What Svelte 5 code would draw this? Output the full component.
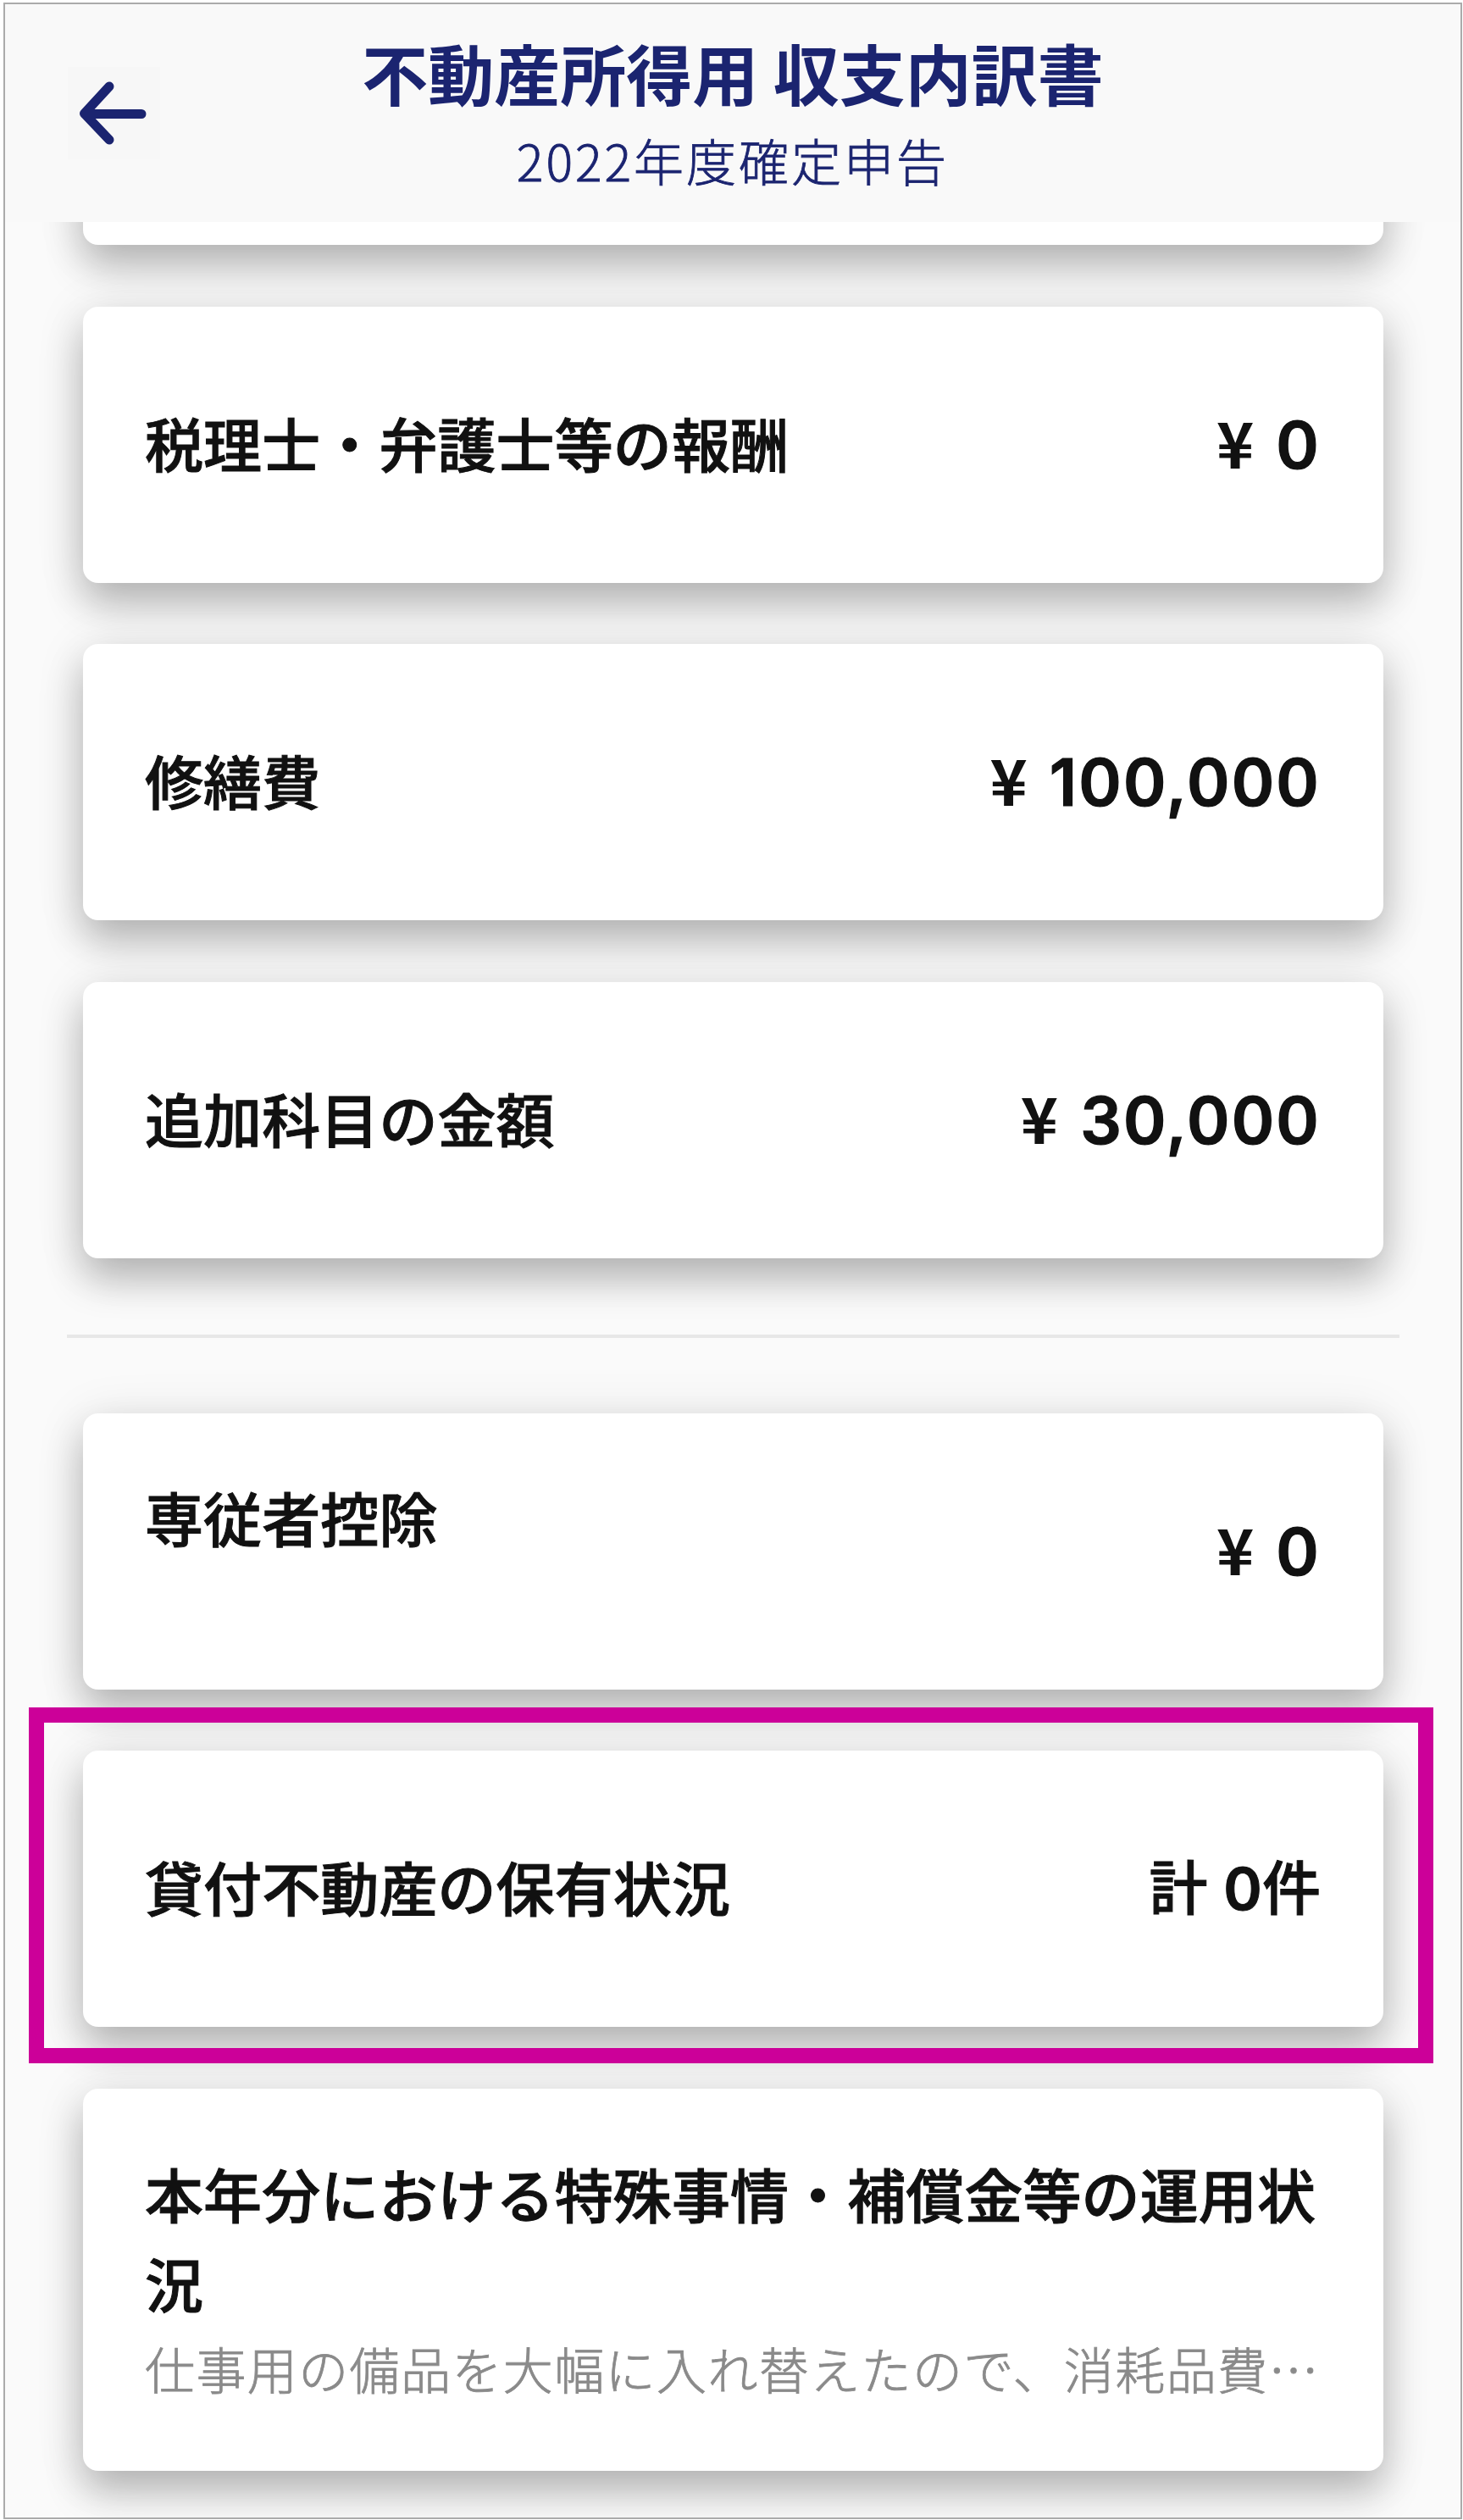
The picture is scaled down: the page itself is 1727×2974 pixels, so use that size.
<script>
  const expenses = [
    { label: '税理士・弁護士等の報酬', amount: '0' },
    { label: '修繕費', amount: '100,000' },
    { label: '追加科目の金額', amount: '30,000' },
  ];
</script>

{#snippet yen(amount)}
  <span class="amount"><span class="yen">¥</span><span class="number">{amount}</span></span>
{/snippet}

<main class="page">
  <div class="frame">
    <header class="header">
      <button class="back" aria-label="戻る">
        <svg viewBox="0 0 109 109" width="109" height="109" fill="none">
          <path d="M49 23 L19.500 55 L49 86 M20 55.500 H87" />
        </svg>
      </button>
      <div class="heading">
        <h1>不動産所得用 収支内訳書</h1>
        <p>2022年度確定申告</p>
      </div>
    </header>

    <div class="content">
      <section class="group first">
        <div class="card peek"></div>
        {#each expenses as row}
          <div class="card">
            <span class="label">{row.label}</span>
            {@render yen(row.amount)}
          </div>
        {/each}
      </section>

      <hr />

      <section class="group">
        <div class="card">
          <span class="label raised">専従者控除</span>
          {@render yen('0')}
        </div>
        <div class="card">
          <span class="label">貸付不動産の保有状況</span>
          <span class="count">計 <b>0</b>件</span>
          <div class="highlight"></div>
        </div>
        <div class="card note">
          <span class="label">本年分における特殊事情・補償金等の運用状況</span>
          <p class="desc">仕事用の備品を大幅に入れ替えたので、消耗品費…</p>
        </div>
      </section>
    </div>
  </div>
</main>

<style>
  :global(body) {
    margin: 0;
    background: #fff;
  }
  .page {
    box-sizing: border-box;
    width: 1727px;
    height: 2974px;
    padding: 3px 1px 1px 4px;
    overflow: hidden;
    font-family: 'Noto Sans CJK JP', sans-serif;
    color: #111;
  }
  .frame {
    box-sizing: border-box;
    height: 100%;
    border: 2px solid #ababab;
    background: #fafafa;
    overflow: hidden;
    display: flex;
    flex-direction: column;
  }
  .header {
    position: relative;
    z-index: 2;
    box-sizing: border-box;
    flex: none;
    height: 257px;
    background: #f9f9f9;
    display: grid;
    grid-template-columns: 109px 1fr 109px;
    padding: 0 74px;
    color: #1b2470;
  }
  .back {
    width: 109px;
    height: 109px;
    margin-top: 74px;
    padding: 0;
    border: 0;
    background: #f7f7f7;
  }
  .back svg {
    display: block;
  }
  .back path {
    stroke: #1b2470;
    stroke-width: 11;
    stroke-linecap: round;
    stroke-linejoin: round;
  }
  .heading {
    text-align: center;
    white-space: nowrap;
  }
  h1 {
    margin: 28px 0 0;
    font-size: 78px;
    line-height: 104px;
    font-weight: 700;
  }
  .heading p {
    margin: 10px 0 0;
    font-size: 59px;
    line-height: 84px;
    font-weight: 300;
    letter-spacing: 3px;
    -webkit-text-stroke: 0.8px currentColor;
  }
  .content {
    flex: none;
    padding: 0 73px;
  }
  .group {
    display: flex;
    flex-direction: column;
    gap: 72.500px;
    padding: 0 18px 0 19px;
  }
  .first {
    margin-top: -299px;
  }
  .card {
    position: relative;
    box-sizing: border-box;
    height: 326px;
    padding: 0 74px 0 73px;
    border-radius: 18px;
    background: #fff;
    box-shadow:
      0 26px 46px rgba(0, 0, 0, 0.23),
      0 6px 60px rgba(0, 0, 0, 0.11);
    display: flex;
    align-items: center;
    justify-content: space-between;
  }
  .label,
  .count {
    position: relative;
    top: -3px;
    font-size: 69px;
    line-height: 106px;
    font-weight: 500;
    letter-spacing: 0.100px;
    -webkit-text-stroke: 1px currentColor;
  }
  .count {
    word-spacing: 3px;
  }
  .raised {
    margin-bottom: 75px;
  }
  .amount {
    position: relative;
    top: -2px;
    display: flex;
    align-items: baseline;
    line-height: 106px;
  }
  .yen {
    font-size: 75px;
    font-weight: 700;
    margin-right: 26px;
  }
  .number {
    font: 600 76.500px/106px Inter, sans-serif;
    letter-spacing: 2.200px;
    -webkit-text-stroke: 1.200px currentColor;
  }
  .count b {
    font-family: Inter, sans-serif;
    font-weight: 600;
  }
  hr {
    width: 1573px;
    height: 4px;
    margin: 90px 0 89px;
    border: 0;
    background: #e7e7e7;
  }
  .highlight {
    position: absolute;
    z-index: 3;
    inset: -51px -59px -43px -64px;
    border: 18px solid #cc0099;
    pointer-events: none;
  }
  .note {
    height: 451px;
    flex-direction: column;
    align-items: flex-start;
    justify-content: flex-start;
    padding-top: 73px;
  }
  .desc {
    margin: 0;
    font-size: 59px;
    line-height: 90px;
    font-weight: 300;
    letter-spacing: 1.400px;
    white-space: nowrap;
    color: #8a8a8a;
    -webkit-text-stroke: 0.8px currentColor;
  }
</style>
